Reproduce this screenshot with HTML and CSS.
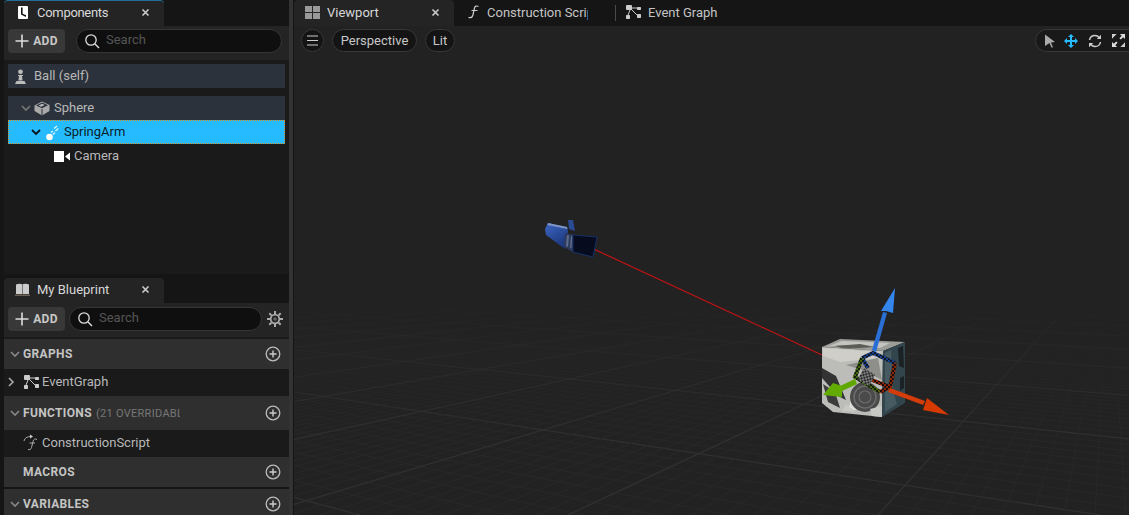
FILE: index.html
```html
<!DOCTYPE html>
<html lang="en">
<head>
    <meta charset="UTF-8">
    <title>Ball - Blueprint Editor</title>
    <link rel="stylesheet" href="styles.css">
</head>
<body>
    <div class="editor">
        <aside class="side">
            <section class="panel panel-components">
                <div class="tabbar">
                    <div class="tab tab-active tab-lit">
                        <svg class="tab-icon" width="10" height="13" viewBox="0 0 10 13"><rect width="10" height="13" rx="1" fill="#fff"/><path d="M3 1.500h1.600v6.200l3.400 1.600v1.600L3 8.600z" fill="#111"/></svg>
                        <span class="tab-label tab-label-tight">Components</span>
                        <svg class="tab-close" width="9" height="9" viewBox="0 0 9 9"><path d="M1.500 1.500l6 6M7.500 1.500l-6 6" stroke="#ccc" stroke-width="1.600"/></svg>
                    </div>
                </div>
                <div class="toolbar">
                    <button class="add-btn"><svg width="14" height="14" viewBox="0 0 14 14"><path d="M7 .5v13M.5 7h13" stroke="#ddd" stroke-width="1.600"/></svg>ADD</button>
                    <div class="search search-wide">
                        <svg width="16" height="16" viewBox="0 0 16 16"><circle cx="7" cy="7" r="5.200" fill="none" stroke="#ddd" stroke-width="1.300"/><path d="M11 11l4 4" stroke="#ddd" stroke-width="1.400"/></svg>
                        <span>Search</span>
                    </div>
                </div>
                <div class="tree">
                    <div class="row row-self">
                        <svg class="pawn" width="13" height="15" viewBox="0 0 13 15"><circle cx="6.500" cy="2.800" r="2.400" fill="#bbb"/><path d="M4 6h5v1H8l.6 4.500H4.400L5 7H4zM2.500 12h8l1.500 3H1z" fill="#bbb"/></svg>
                        <span>Ball (self)</span>
                    </div>
                    <div class="row row-sel-parent">
                        <svg class="chev" width="10" height="7" viewBox="0 0 10 7"><path d="M1 1l4 4 4-4" fill="none" stroke="#777" stroke-width="1.600"/></svg>
                        <svg class="box-icon" width="16" height="15" viewBox="0 0 16 15"><path d="M8 .5l7.500 3.500v6L8 14.500.5 10V4.500z" fill="#aaa"/><path d="M2 4.600L8.300 1.500l5.700 2.700-6 3z" fill="#2b323b"/><path d="M4.500 4.500l3.700-1.800 2.500 1.200-3.700 1.900z" fill="#bbb"/><path d="M8 8v6.500" stroke="#2b323b"/></svg>
                        <span>Sphere</span>
                    </div>
                    <div class="row row-selected">
                        <svg class="chev" width="10" height="7" viewBox="0 0 10 7"><path d="M1 1l4 4 4-4" fill="none" stroke="#0b1418" stroke-width="1.800"/></svg>
                        <svg class="spring-icon" width="13" height="16" viewBox="0 0 13 16"><circle cx="3.500" cy="12" r="3.300" fill="#fff"/><path d="M5 7.500l2-1.500M7 9.500l2-2M8 3.500l3-2.500M9.500 6l2.800-2.500" stroke="#d8f3ff" stroke-width="1.300"/></svg>
                        <span>SpringArm</span>
                    </div>
                    <div class="row row-camera">
                        <svg class="cam-icon" width="16" height="11" viewBox="0 0 16 11"><rect width="10" height="11" fill="#fff"/><path d="M11 5.500L16 1.500v8z" fill="#fff"/></svg>
                        <span>Camera</span>
                    </div>
                </div>
            </section>

            <section class="panel panel-blueprint">
                <div class="tabbar">
                    <div class="tab tab-active">
                        <svg class="tab-icon book" width="15" height="13" viewBox="0 0 15 13"><path d="M1 1.500C3.500.5 6 .5 7.500 1.500 9 .5 11.500.5 14 1.500V11H1z" fill="#ccc"/><path d="M0 11.500h15V13H0z" fill="#6e6258"/><path d="M7.500 1.500V11" stroke="#777"/></svg>
                        <span class="tab-label">My Blueprint</span>
                        <svg class="tab-close" width="9" height="9" viewBox="0 0 9 9"><path d="M1.500 1.500l6 6M7.500 1.500l-6 6" stroke="#ccc" stroke-width="1.600"/></svg>
                    </div>
                </div>
                <div class="toolbar toolbar-bp">
                    <button class="add-btn"><svg width="14" height="14" viewBox="0 0 14 14"><path d="M7 .5v13M.5 7h13" stroke="#ddd" stroke-width="1.600"/></svg>ADD</button>
                    <div class="search search-bp">
                        <svg width="16" height="16" viewBox="0 0 16 16"><circle cx="7" cy="7" r="5.200" fill="none" stroke="#ddd" stroke-width="1.300"/><path d="M11 11l4 4" stroke="#ddd" stroke-width="1.400"/></svg>
                        <span>Search</span>
                    </div>
                    <svg class="gear" width="16" height="16" viewBox="0 0 16 16"><circle cx="8" cy="8" r="4.300" fill="none" stroke="#aaa" stroke-width="1.800"/><circle cx="8" cy="8" r="1.800" fill="#666"/><path d="M8 0v3M8 13v3M0 8h3M13 8h3M2.300 2.300l2.100 2.100M11.600 11.600l2.100 2.100M13.700 2.300l-2.100 2.100M4.400 11.600l-2.100 2.100" stroke="#aaa" stroke-width="2"/></svg>
                </div>
                <div class="sections">
                    <div class="section sec-graphs">
                        <svg class="chev" width="10" height="7" viewBox="0 0 10 7"><path d="M1 1l4 4 4-4" fill="none" stroke="#888" stroke-width="1.600"/></svg>
                        <span class="sec-title">GRAPHS</span>
                        <svg class="sec-add" width="16" height="16" viewBox="0 0 16 16"><circle cx="8" cy="8" r="6.800" fill="none" stroke="#bbb" stroke-width="1.300"/><path d="M8 4.500v7M4.500 8h7" stroke="#ccc" stroke-width="1.400"/></svg>
                    </div>
                    <div class="item item-graph">
                        <svg class="item-chev" width="7" height="10" viewBox="0 0 7 10"><path d="M1 1l4 4-4 4" fill="none" stroke="#aaa" stroke-width="1.600"/></svg>
                        <svg class="graph-icon" width="15" height="14" viewBox="0 0 15 14"><g fill="#ccc"><rect width="6" height="5" rx="1"/><rect x="11" y="2" width="4" height="3" rx=".7"/><rect y="10" width="4" height="4" rx=".7"/><rect x="11" y="9" width="4" height="4" rx=".7"/></g><path d="M5 3h6M4 5L2 10M5 4l6 6" stroke="#ccc"/></svg>
                        <span>EventGraph</span>
                    </div>
                    <div class="section sec-functions">
                        <svg class="chev" width="10" height="7" viewBox="0 0 10 7"><path d="M1 1l4 4 4-4" fill="none" stroke="#888" stroke-width="1.600"/></svg>
                        <span class="sec-title">FUNCTIONS</span>
                        <span class="sec-note">(21 OVERRIDABLE)</span>
                        <svg class="sec-add" width="16" height="16" viewBox="0 0 16 16"><circle cx="8" cy="8" r="6.800" fill="none" stroke="#bbb" stroke-width="1.300"/><path d="M8 4.500v7M4.500 8h7" stroke="#ccc" stroke-width="1.400"/></svg>
                    </div>
                    <div class="item item-func">
                        <svg class="func-icon" width="16" height="17" viewBox="0 0 16 17"><path d="M1 7C1.500 4 4 2.500 8 2.500" fill="none" stroke="#aaa"/><path d="M7 .5l3 2-3 2z" fill="#ccc"/><path d="M14 5.500c-2-1-3.500-.5-4 2l-1.500 6c-.5 2-2 2.500-3.500 2M6.500 9H12" fill="none" stroke="#aaa"/></svg>
                        <span>ConstructionScript</span>
                    </div>
                    <div class="section sec-macros">
                        <span class="sec-title">MACROS</span>
                        <svg class="sec-add" width="16" height="16" viewBox="0 0 16 16"><circle cx="8" cy="8" r="6.800" fill="none" stroke="#bbb" stroke-width="1.300"/><path d="M8 4.500v7M4.500 8h7" stroke="#ccc" stroke-width="1.400"/></svg>
                    </div>
                    <div class="section sec-variables">
                        <svg class="chev" width="10" height="7" viewBox="0 0 10 7"><path d="M1 1l4 4 4-4" fill="none" stroke="#888" stroke-width="1.600"/></svg>
                        <span class="sec-title">VARIABLES</span>
                        <svg class="sec-add" width="16" height="16" viewBox="0 0 16 16"><circle cx="8" cy="8" r="6.800" fill="none" stroke="#bbb" stroke-width="1.300"/><path d="M8 4.500v7M4.500 8h7" stroke="#ccc" stroke-width="1.400"/></svg>
                    </div>
                </div>
            </section>
        </aside>

        <div class="splitter"></div>

        <main class="view">
            <div class="tabbar">
                <div class="tab tab-active">
                    <svg class="tab-icon" width="15" height="13" viewBox="0 0 15 13"><g fill="#999"><rect width="7" height="6"/><rect x="8" width="7" height="6"/><rect y="7" width="7" height="6"/><rect x="8" y="7" width="7" height="6"/></g></svg>
                    <span class="tab-label">Viewport</span>
                    <svg class="tab-close" width="9" height="9" viewBox="0 0 9 9"><path d="M1.500 1.500l6 6M7.500 1.500l-6 6" stroke="#ccc" stroke-width="1.600"/></svg>
                </div>
                <div class="tab tab-doc tab-construction">
                    <svg class="tab-icon" width="11" height="14" viewBox="0 0 11 14"><path d="M10.500 1.500C8.500.5 7 1 6.500 3L4.800 10.500C4.300 12.500 2.500 13 .5 12.500M3.500 5.500h6" fill="none" stroke="#ccc" stroke-width="1.200"/></svg>
                    <span class="tab-label clip-label">Construction Script</span>
                </div>
                <div class="tab tab-doc tab-event">
                    <svg class="tab-icon" width="15" height="14" viewBox="0 0 15 14"><g fill="#ccc"><rect width="6" height="5" rx="1"/><rect x="11" y="2" width="4" height="3" rx=".7"/><rect y="10" width="4" height="4" rx=".7"/><rect x="11" y="9" width="4" height="4" rx=".7"/></g><path d="M5 3h6M4 5L2 10M5 4l6 6" stroke="#ccc"/></svg>
                    <span class="tab-label">Event Graph</span>
                </div>
            </div>
            <div class="canvas">
                <svg class="scene" id="scene" width="835" height="489" viewBox="294 26 835 489">
                    <defs>
                        <linearGradient id="fade-minor" gradientUnits="userSpaceOnUse" x1="0" y1="320" x2="0" y2="450">
                            <stop offset="0" stop-color="#272727" stop-opacity="0"/>
                            <stop offset="1" stop-color="#272727"/>
                        </linearGradient>
                        <linearGradient id="fade-major" gradientUnits="userSpaceOnUse" x1="0" y1="300" x2="0" y2="440">
                            <stop offset="0" stop-color="#303030" stop-opacity="0"/>
                            <stop offset="1" stop-color="#303030"/>
                        </linearGradient>
                        <linearGradient id="cam-body" gradientUnits="userSpaceOnUse" x1="548" y1="224" x2="562" y2="248">
                            <stop offset="0" stop-color="#3a62bc"/>
                            <stop offset="1" stop-color="#1a3478"/>
                        </linearGradient>
                        <pattern id="chk-blue" width="4" height="4" patternUnits="userSpaceOnUse"><rect width="4" height="4" fill="#0c1626"/><rect width="2" height="2" fill="#1b3f86"/><rect x="2" y="2" width="2" height="2" fill="#1b3f86"/></pattern>
                        <pattern id="chk-green" width="4" height="4" patternUnits="userSpaceOnUse"><rect width="4" height="4" fill="#141a0c"/><rect width="2" height="2" fill="#42680f"/><rect x="2" y="2" width="2" height="2" fill="#42680f"/></pattern>
                        <pattern id="chk-red" width="4" height="4" patternUnits="userSpaceOnUse"><rect width="4" height="4" fill="#1a0d0a"/><rect width="2" height="2" fill="#8c2608"/><rect x="2" y="2" width="2" height="2" fill="#8c2608"/></pattern>
                        <pattern id="chk-white" width="4" height="4" patternUnits="userSpaceOnUse"><rect width="4" height="4" fill="#2a2a2a"/><rect width="2" height="2" fill="#808080"/><rect x="2" y="2" width="2" height="2" fill="#808080"/></pattern>
                    </defs>
                    <g id="grid"></g>

                    <!-- spring arm line -->
                    <path d="M585 245L822 355" stroke="#c01414" stroke-width="1.200"/>

                    <!-- camera -->
                    <path d="M568 220l5 0 2 11-6-2z" fill="#2a4a94"/>
                    <path d="M548 223L567 227 568 231 565 249 546 235 545 229z" fill="url(#cam-body)"/>
                    <path d="M548 223L567 227 567.500 229 547.500 225z" fill="#7f96c2"/>
                    <path d="M565 233l10 2-2 17-9-5z" fill="#2c3a5c"/>
                    <path d="M567 235l2 .5-1 11.500-2-1zM571 236l1.500.3-1 12-1.500-.6z" fill="#5f6d8a"/>
                    <path d="M573 235L597 237 593 257 573 252z" fill="#060b1e" stroke="#163068"/>

                    <!-- cube -->
                    <path d="M822 347L840 339 905 342 883 351z" fill="#9c9c98"/>
                    <path d="M826 347L842 341 890 343 880 348 840 345z" fill="#c4c4c0"/>
                    <path d="M835 346L860 344 875 347 845 349z" fill="#5c5c56"/>
                    <path d="M822 347L883 351 882 417 833 412 822 403z" fill="#bcbcb8"/>
                    <path d="M823 348L880 352 878 358 840 362 823 356z" fill="#d0cec9"/>
                    <path d="M846 365L878 358 882 380 862 370z" fill="#8e8e8a"/>
                    <path d="M822 368L836 376 846 400 838 396 822 378z" fill="#333"/>
                    <path d="M823 384L835 392 840 408 828 402z" fill="#3c3c3c"/>
                    <path d="M851 400L864 396 860 410 848 410z" fill="#dededa"/>
                    <circle cx="865" cy="397" r="15" fill="#4a4a4a"/>
                    <circle cx="865" cy="397" r="11" fill="none" stroke="#6c6c6c" stroke-width="1.500"/>
                    <circle cx="865" cy="397" r="6" fill="none" stroke="#6c6c6c" stroke-width="1.200"/>
                    <path d="M846 404l10 8-14-1zM870 409l12-3v11l-10-1z" fill="#c8c8c4"/>
                    <path d="M883 351L905 342 905 403 882 417z" fill="#33454c"/>
                    <path d="M885 353l6-3 2 40 4 14-12 8z" fill="#465a62"/>
                    <path d="M898 348l5-2 1 22-5-2zM900 378l4-2v12l-4 3z" fill="#1a2226"/>

                    <!-- move gizmo -->
                    <g fill="none" stroke-width="4">
                        <path d="M862 358L873 353 895 363" stroke="url(#chk-blue)"/>
                        <path d="M862 358L868 368" stroke="url(#chk-blue)"/>
                        <path d="M862 358L855 377 880 392" stroke="url(#chk-green)"/>
                        <path d="M895 363L890 387 872 380M890 387L880 392" stroke="url(#chk-red)"/>
                    </g>
                    <rect x="860" y="371" width="13" height="13" transform="rotate(30 867 377)" fill="url(#chk-white)"/>
                    <path d="M872 350L883 312 887 313 876 352z" fill="#2a6fd6"/>
                    <path d="M895 288L893 313 886 311 881 311z" fill="#3586ec"/>
                    <path d="M855 379L838 387 840 392 857 384z" fill="#5fa800"/>
                    <path d="M823 395L833 383 842 386 842 397z" fill="#62ac00"/>
                    <path d="M890 388L925 401 923 405 888 392z" fill="#d43c0a"/>
                    <path d="M949 415L927 398 923 410z" fill="#d63a00"/>
                </svg>
                <div class="vp-bar">
                    <button class="pill pill-menu"><svg width="13" height="11" viewBox="0 0 13 11"><path d="M1 1h11M1 5.500h11M1 10h11" stroke="#ccc"/></svg></button>
                    <button class="pill pill-perspective">Perspective</button>
                    <button class="pill pill-lit">Lit</button>
                    <div class="pill pill-tools">
                        <svg class="tool-select" width="12" height="14" viewBox="0 0 12 14"><path d="M1 .5L11 8l-4 .5 2 5H7.500L5.500 9 1 12z" fill="#aaa"/></svg>
                        <svg width="14" height="14" viewBox="0 0 14 14"><path d="M7 0l3 3H8v3h3V4l3 3-3 3V8H8v3h2l-3 3-3-3h2V8H3v2L0 7l3-3v2h3V3H4z" fill="#26bbff"/></svg>
                        <svg width="14" height="14" viewBox="0 0 14 14"><path d="M1.500 6C2 3 4.300 1.500 7 1.500c1.800 0 3.200.8 4 2M12.500 8c-.5 3-2.800 4.500-5.500 4.500-1.800 0-3.200-.8-4-2" fill="none" stroke="#ccc" stroke-width="1.500"/><path d="M13 .8V5H8.800zM1 13.200V9h4.200z" fill="#ccc"/></svg>
                        <svg width="13" height="13" viewBox="0 0 14 14"><path d="M14 0v5.500L12 3.500 9.500 6 8 4.500 10.500 2 8.500 0zM0 14V8.500L2 10.500 4.500 8 6 9.500 3.500 12l2 2z" fill="#ddd"/><path d="M0 0h5L0 5zM14 14H9l5-5z" fill="#ccc"/></svg>
                    </div>
                </div>
            </div>
        </main>
    </div>
    <script src="grid.js"></script>
</body>
</html>
```
FILE: styles.css
```css
html, body {
    margin: 0;
    height: 100%;
    overflow: hidden;
    background-color: #151515;
    font-family: Roboto, "Liberation Sans", sans-serif;
    font-size: 13px;
    color: #b8b8b8;
}
button {
    font-family: inherit;
    border: none;
    padding: 0;
}
.editor {
    display: flex;
    height: 515px;
}
.side {
    width: 289px;
    flex-shrink: 0;
    display: flex;
    flex-direction: column;
    padding-left: 4px;
    box-sizing: border-box;
}
.splitter {
    width: 4px;
    background-color: #333;
    margin-right: 1px;
    flex-shrink: 0;
}
.panel {
    display: flex;
    flex-direction: column;
}
.panel-components {
    height: 274px;
    background-color: #1a1a1a;
}
.panel-blueprint {
    flex: 1;
    margin-top: 4px;
    min-height: 0;
    overflow: hidden;
}

/* tabs */
.tabbar {
    display: flex;
    height: 26px;
    flex-shrink: 0;
    background-color: #151515;
}
.panel-blueprint .tabbar {
    height: 25px;
}
.tab {
    width: 160px;
    display: flex;
    align-items: center;
    box-sizing: border-box;
    padding: 0 0 2px 14px;
    border-radius: 4px 4px 0 0;
}
.tab-active {
    background-color: #242424;
}
.tab-lit {
    border-top: 1px solid #1f6f98;
    padding-bottom: 3px;
}
.tab-icon {
    flex-shrink: 0;
}
.tab-label {
    color: #d8d8d8;
    white-space: nowrap;
    margin-left: 9px;
}
.tab-label-tight {
    letter-spacing: -.3px;
}
.tab-close {
    margin-left: auto;
    margin-right: 14px;
}
.panel-blueprint .tab {
    padding-left: 11px;
}
.panel-blueprint .tab-label {
    margin-left: 7px;
}
.view .tab-active {
    padding-left: 11px;
}
.view .tab-label {
    margin-left: 7px;
}
.tab-doc .tab-label {
    color: #c4c4c4;
}
.tab-construction {
    width: 161px;
    padding-left: 14px;
}
.tab-construction .tab-label {
    margin-left: 8px;
}
.clip-label {
    width: 101px;
    overflow: hidden;
}
.tab-event {
    height: 16px;
    margin-top: 5px;
    padding-left: 10px;
    border-left: 1px solid #4a4a4a;
    border-radius: 0;
}

/* toolbars */
.toolbar {
    height: 34px;
    flex-shrink: 0;
    display: flex;
    align-items: flex-start;
    box-sizing: border-box;
    padding: 3px 0 0 4px;
    background-color: #242424;
}
.toolbar-bp {
    padding-top: 4px;
    height: 36px;
    border-bottom: 2px solid #1a1a1a;
}
.add-btn {
    width: 57px;
    height: 24px;
    display: flex;
    align-items: center;
    justify-content: center;
    gap: 4px;
    border-radius: 4px;
    background-color: #383838;
    color: #c8c8c8;
    font-size: 12px;
    font-weight: 700;
    letter-spacing: .3px;
}
.search {
    height: 24px;
    display: flex;
    align-items: center;
    gap: 6px;
    box-sizing: border-box;
    padding-left: 7px;
    background-color: #0f0f0f;
    border: 1px solid #363636;
    border-radius: 12px;
    color: #555;
}
.search span {
    position: relative;
    top: -2px;
}
.search-wide {
    width: 206px;
    margin-left: 11px;
}
.search-bp {
    width: 193px;
    margin-left: 4px;
}
.gear {
    margin: 4px 0 0 5px;
}

/* component tree */
.tree {
    padding: 4px 4px 0;
    display: flex;
    flex-direction: column;
}
.row {
    height: 24px;
    display: flex;
    align-items: center;
    box-sizing: border-box;
    white-space: nowrap;
    padding-bottom: 2px;
}
.row svg {
    position: relative;
    top: 1px;
}
.row-self {
    background-color: #2b323b;
    margin-bottom: 8px;
    padding-left: 6px;
}
.row-self span {
    margin-left: 7px;
}
.row-sel-parent {
    background-color: #2b323b;
    padding-left: 13px;
}
.row-sel-parent .box-icon {
    margin-left: 3px;
}
.row-sel-parent span {
    margin-left: 4px;
}
.row-selected {
    background-color: #26bbff;
    border: 1px dotted #d08a20;
    padding-left: 22px;
    padding-bottom: 1px;
    color: #0b1c26;
}
.row-selected .spring-icon {
    margin-left: 5px;
}
.row-selected span {
    margin-left: 5px;
}
.row-camera {
    padding-left: 46px;
}
.row-camera span {
    margin-left: 4px;
}

/* my blueprint sections */
.sections {
    display: flex;
    flex-direction: column;
    flex: 1;
}
.section {
    display: flex;
    align-items: center;
    flex-shrink: 0;
    box-sizing: border-box;
    background-color: #2f2f2f;
    padding-left: 6px;
    color: #c4c4c4;
}
.sec-graphs {
    height: 30px;
}
.sec-functions {
    height: 34px;
}
.sec-macros {
    height: 30px;
    padding-left: 19px;
}
.sec-variables {
    height: 30px;
    margin-top: 2px;
}
.sec-title {
    font-size: 12px;
    font-weight: 700;
    margin-left: 3px;
    letter-spacing: .35px;
}
.sec-macros .sec-title {
    margin-left: 0;
}
.sec-note {
    width: 84px;
    margin-left: 4px;
    overflow: hidden;
    white-space: nowrap;
    font-size: 11px;
    letter-spacing: .3px;
    color: #777;
}
.sec-add {
    margin-left: auto;
    margin-right: 8px;
}
.item {
    height: 27px;
    flex-shrink: 0;
    display: flex;
    align-items: center;
    background-color: #1a1a1a;
    white-space: nowrap;
    padding-bottom: 2px;
    box-sizing: border-box;
}
.item span {
    margin-left: 3px;
}
.item-chev {
    margin-left: 4px;
}
.graph-icon {
    margin-left: 9px;
}
.func-icon {
    margin-left: 19px;
}

/* viewport */
.view {
    flex: 1;
    min-width: 0;
    display: flex;
    flex-direction: column;
    background-color: #222;
}
.canvas {
    flex: 1;
    position: relative;
    overflow: hidden;
}
.scene {
    position: absolute;
    left: 0;
    top: 0;
}
.vp-bar {
    position: relative;
    display: flex;
    gap: 8px;
    padding: 3px 0 0 7px;
}
.pill {
    height: 23px;
    box-sizing: border-box;
    display: flex;
    align-items: center;
    justify-content: center;
    background-color: #141414;
    border: 1px solid #383838;
    border-radius: 12px;
    color: #c8c8c8;
    font-size: 13px;
}
.pill-menu {
    width: 23px;
}
.pill-perspective {
    width: 85px;
}
.pill-lit {
    width: 30px;
}
.pill-tools {
    width: 111px;
    margin-left: auto;
    margin-right: -17px;
    gap: 10px;
    justify-content: flex-start;
    padding-left: 8px;
    background-color: #191919;
}
.tool-select {
    margin-right: -2px;
}
```
FILE: grid.js
```js
// ground grid, drawn from the two vanishing points of the viewport camera
const gridGroup = document.getElementById('grid');
const bottom = 515;

function addFamily(vanishX, vanishY, startX, step) {
    for (let k = -120; k <= 120; k++) {
        const x = startX + k * step;
        const major = k % 10 === 0;
        const line = document.createElementNS('http://www.w3.org/2000/svg', 'line');
        line.setAttribute('x1', vanishX);
        line.setAttribute('y1', vanishY);
        line.setAttribute('x2', x);
        line.setAttribute('y2', bottom);
        line.setAttribute('stroke', major ? 'url(#fade-major)' : 'url(#fade-minor)');
        line.setAttribute('stroke-width', major ? 1.2 : 1);
        gridGroup.appendChild(line);
    }
}

addFamily(-636, 250, 1100, 74);
addFamily(1109, 261, 878, 31);
```
